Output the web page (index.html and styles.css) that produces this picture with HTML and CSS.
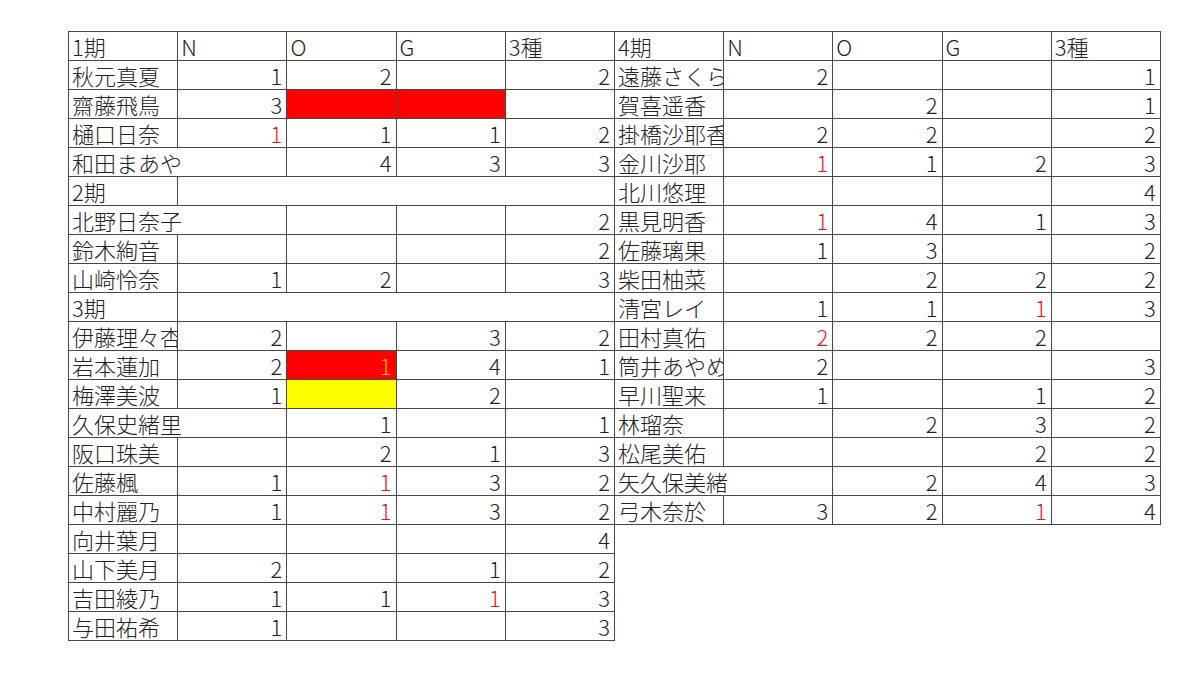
FILE: index.html
```html
<!DOCTYPE html>
<html lang="ja">
<head>
<meta charset="utf-8">
<link rel="stylesheet" href="styles.css">
</head>
<body>
<div class="sheet">
<table class="grid">
<colgroup>
<col><col><col><col><col><col><col><col><col><col>
</colgroup>
<tbody>
<tr><td>1期</td><td>N</td><td>O</td><td>G</td><td>3種</td><td>4期</td><td>N</td><td>O</td><td>G</td><td>3種</td></tr>
<tr><td>秋元真夏</td><td class="n">1</td><td class="n">2</td><td></td><td class="n">2</td><td class="clip">遠藤さくら</td><td class="n">2</td><td></td><td></td><td class="n">1</td></tr>
<tr><td>齋藤飛鳥</td><td class="n">3</td><td class="red"></td><td class="red"></td><td></td><td>賀喜遥香</td><td></td><td class="n">2</td><td></td><td class="n">1</td></tr>
<tr><td>樋口日奈</td><td class="n r">1</td><td class="n">1</td><td class="n">1</td><td class="n">2</td><td class="clip">掛橋沙耶香</td><td class="n">2</td><td class="n">2</td><td></td><td class="n">2</td></tr>
<tr><td colspan="2">和田まあや</td><td class="n">4</td><td class="n">3</td><td class="n">3</td><td>金川沙耶</td><td class="n r">1</td><td class="n">1</td><td class="n">2</td><td class="n">3</td></tr>
<tr><td>2期</td><td colspan="4"></td><td>北川悠理</td><td></td><td></td><td></td><td class="n">4</td></tr>
<tr><td colspan="2">北野日奈子</td><td></td><td></td><td class="n">2</td><td>黒見明香</td><td class="n r">1</td><td class="n">4</td><td class="n">1</td><td class="n">3</td></tr>
<tr><td>鈴木絢音</td><td></td><td></td><td></td><td class="n">2</td><td>佐藤璃果</td><td class="n">1</td><td class="n">3</td><td></td><td class="n">2</td></tr>
<tr><td>山崎怜奈</td><td class="n">1</td><td class="n">2</td><td></td><td class="n">3</td><td>柴田柚菜</td><td></td><td class="n">2</td><td class="n">2</td><td class="n">2</td></tr>
<tr><td>3期</td><td colspan="4"></td><td>清宮レイ</td><td class="n">1</td><td class="n">1</td><td class="n r">1</td><td class="n">3</td></tr>
<tr><td class="clip">伊藤理々杏</td><td class="n">2</td><td></td><td class="n">3</td><td class="n">2</td><td>田村真佑</td><td class="n r">2</td><td class="n">2</td><td class="n">2</td><td></td></tr>
<tr><td>岩本蓮加</td><td class="n">2</td><td class="n red gold">1</td><td class="n">4</td><td class="n">1</td><td class="clip">筒井あやめ</td><td class="n">2</td><td></td><td></td><td class="n">3</td></tr>
<tr><td>梅澤美波</td><td class="n">1</td><td class="yellow"></td><td class="n">2</td><td></td><td>早川聖来</td><td class="n">1</td><td></td><td class="n">1</td><td class="n">2</td></tr>
<tr><td colspan="2">久保史緒里</td><td class="n">1</td><td></td><td class="n">1</td><td>林瑠奈</td><td></td><td class="n">2</td><td class="n">3</td><td class="n">2</td></tr>
<tr><td>阪口珠美</td><td></td><td class="n">2</td><td class="n">1</td><td class="n">3</td><td>松尾美佑</td><td></td><td></td><td class="n">2</td><td class="n">2</td></tr>
<tr><td>佐藤楓</td><td class="n">1</td><td class="n r">1</td><td class="n">3</td><td class="n">2</td><td colspan="2">矢久保美緒</td><td class="n">2</td><td class="n">4</td><td class="n">3</td></tr>
<tr><td>中村麗乃</td><td class="n">1</td><td class="n r">1</td><td class="n">3</td><td class="n">2</td><td>弓木奈於</td><td class="n">3</td><td class="n">2</td><td class="n r">1</td><td class="n">4</td></tr>
<tr><td>向井葉月</td><td></td><td></td><td></td><td class="n">4</td><td class="blank" colspan="5"></td></tr>
<tr><td>山下美月</td><td class="n">2</td><td></td><td class="n">1</td><td class="n">2</td><td class="blank" colspan="5"></td></tr>
<tr><td>吉田綾乃</td><td class="n">1</td><td class="n">1</td><td class="n r">1</td><td class="n">3</td><td class="blank" colspan="5"></td></tr>
<tr><td>与田祐希</td><td class="n">1</td><td></td><td></td><td class="n">3</td><td class="blank" colspan="5"></td></tr>
</tbody>
</table>
</div>
</body>
</html>
```

FILE: styles.css
```css
html, body {
  margin: 0;
  padding: 0;
  background: #ffffff;
}

.sheet {
  padding: 31px 0 0 68px;
}

.grid {
  border-collapse: collapse;
  table-layout: fixed;
  width: 1092px;
  font-family: "Noto Sans CJK JP", "Noto Sans", sans-serif;
  font-weight: 300;
  font-size: 22px;
  color: #222222;
}

.grid col {
  width: 109.2px;
}

.grid tr {
  height: 29px;
}

.grid td {
  border: 1px solid #484848;
  padding: 0 3px 0 3px;
  white-space: nowrap;
  line-height: 27px;
  vertical-align: middle;
  text-align: left;
}

.grid td.clip {
  overflow: hidden;
  text-overflow: clip;
}

.grid td.n {
  text-align: right;
  padding-right: 4px;
}

.grid td.r {
  color: #e8101a;
}

.grid td.red {
  background: #ff0000;
}

.grid td.gold {
  color: #ffc000;
}

.grid td.yellow {
  background: #ffff00;
}

.grid td.blank {
  border: none;
}
```
